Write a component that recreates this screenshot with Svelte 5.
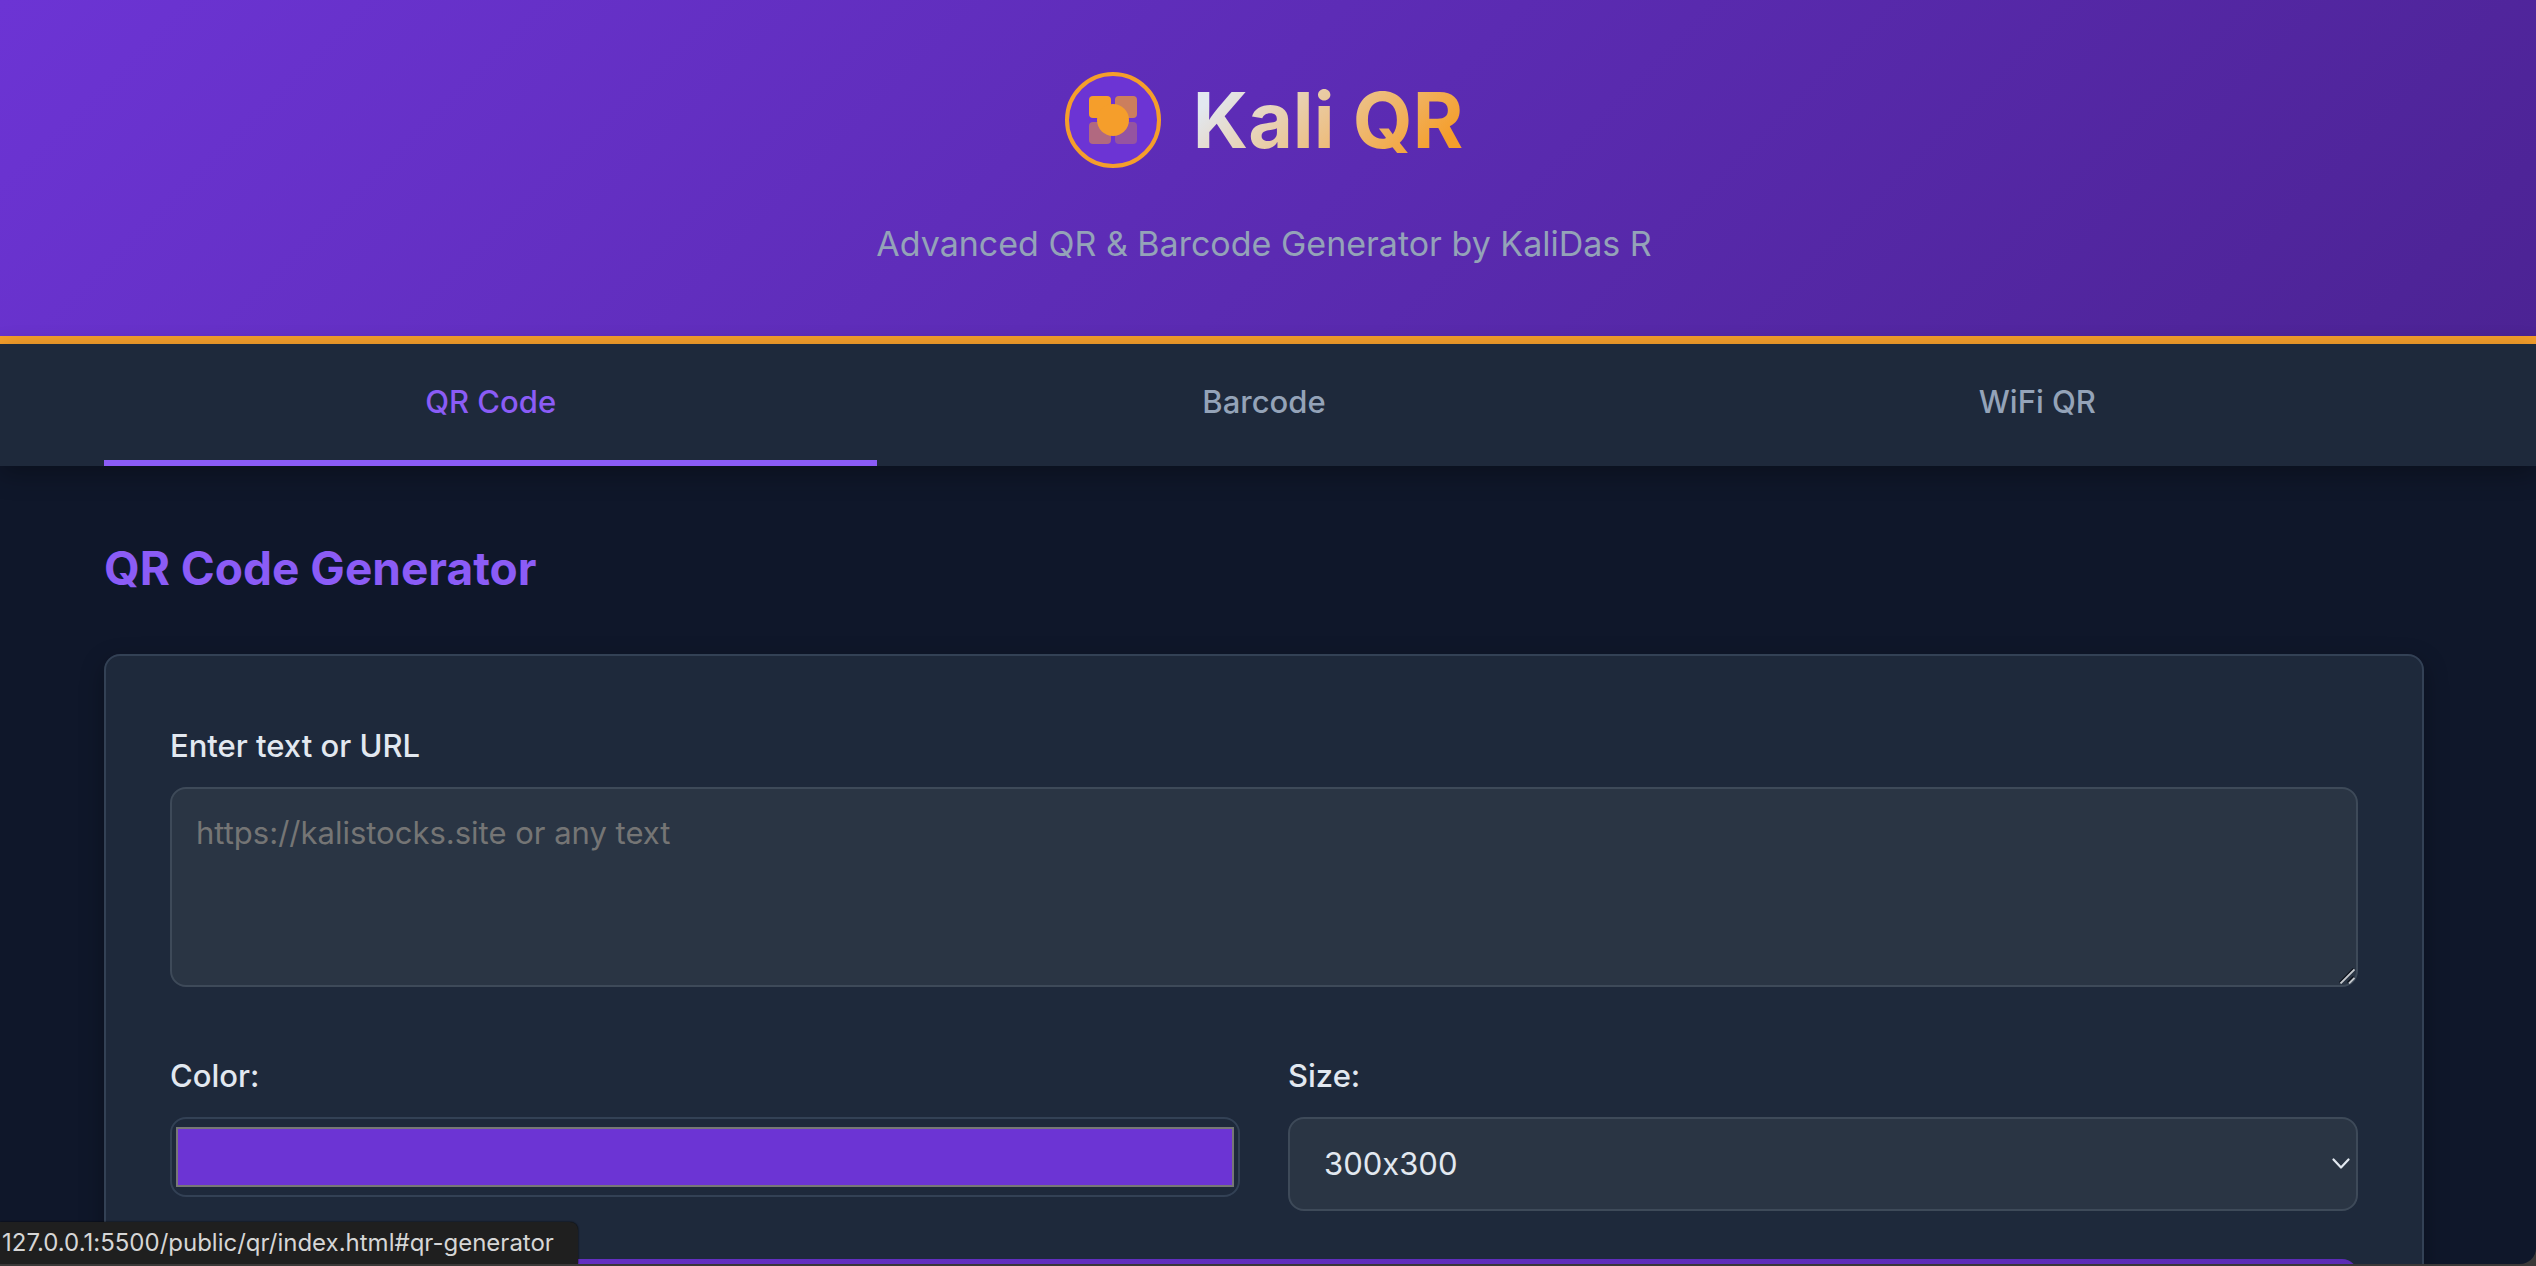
<script>
  const tabs = ['QR Code', 'Barcode', 'WiFi QR'];
  const sizes = ['200x200', '300x300', '400x400', '500x500'];
  let active = $state(0);
  let text = $state('');
  let color = $state('#6c34d4');
  let size = $state('300x300');
</script>

<div class="page">
  <header>
    <div class="brand">
      <svg class="logo" viewBox="0 0 96 96" aria-hidden="true">
        <circle cx="48" cy="48" r="46" fill="#6c34d4" stroke="#f59e2b" stroke-width="4" />
        <g fill="#f59e2b">
          <rect x="24" y="24" width="22" height="22" rx="4" />
          <rect x="50" y="24" width="22" height="22" rx="4" opacity="0.7" />
          <rect x="24" y="50" width="22" height="22" rx="4" opacity="0.5" />
          <rect x="50" y="50" width="22" height="22" rx="4" opacity="0.3" />
          <circle cx="48" cy="48" r="16" />
        </g>
      </svg>
      <h1>Kali QR</h1>
    </div>
    <p class="tagline">Advanced QR &amp; Barcode Generator by KaliDas R</p>
  </header>

  <nav>
    {#each tabs as tab, i}
      <button type="button" class="tab" class:active={active === i} onclick={() => (active = i)}>{tab}</button>
    {/each}
  </nav>

  <main>
    <h2>QR Code Generator</h2>
    <form class="card">
      <div class="field">
        <label for="content">Enter text or URL</label>
        <div class="stack textbox">
          <textarea id="content" bind:value={text} placeholder="https://kalistocks.site or any text"></textarea>
          <svg viewBox="0 0 16 16" aria-hidden="true">
            <path d="M0.5 14.5 14.5 0.5M8.5 14.5 14.5 8.5" stroke="#0b1018" stroke-width="1.5" />
            <path d="M1.5 15.5 15.5 1.5M10 15.5 15.5 10" stroke="#c3c7cc" stroke-width="1.8" />
          </svg>
        </div>
      </div>
      <div class="options">
        <div class="field">
          <label for="color">Color:</label>
          <input id="color" type="color" bind:value={color} />
        </div>
        <div class="field">
          <label for="size">Size:</label>
          <div class="stack select">
            <select id="size" bind:value={size}>
              {#each sizes as s}
                <option>{s}</option>
              {/each}
            </select>
            <svg viewBox="0 0 18 12" aria-hidden="true">
              <path d="M1.5 1.5 9 9.5 16.5 1.5" fill="none" stroke="#e2e8f0" stroke-width="2.2" stroke-linecap="round" stroke-linejoin="round" />
            </svg>
          </div>
        </div>
      </div>
      <button type="button" class="generate" aria-label="Generate"></button>
    </form>
  </main>

  <div class="status">127.0.0.1:5500/public/qr/index.html#qr-generator</div>
</div>

<style>
  :global(body) {
    background: #3a3838;
  }
  .page {
    box-sizing: border-box;
    height: calc(100vh - 2px);
    overflow: hidden;
    position: relative;
    border-bottom-right-radius: 16px;
    background: #0f172a;
    color: #e2e8f0;
    font-family: Inter, 'Liberation Sans', sans-serif;
    font-size: 31px;
    line-height: 52px;
    font-feature-settings: 'calt' 0;
  }
  h1, h2, p {
    margin: 0;
  }
  header {
    display: flex;
    flex-direction: column;
    align-items: center;
    gap: 48px;
    padding: 72px 112px 64px 104px;
    background: linear-gradient(135deg, #6c34d4, #4c2394);
    border-bottom: 8px solid #f59e2b;
  }
  .brand {
    display: flex;
    align-items: center;
    gap: 32px;
  }
  .logo {
    width: 96px;
    height: 96px;
  }
  h1 {
    font-size: 77px;
    line-height: 96px;
    font-weight: 700;
    background: linear-gradient(135deg, #e2e8f0 12%, #f59e2b 88%);
    background-clip: text;
    color: transparent;
  }
  .tagline {
    font-size: 34px;
    line-height: 56px;
    color: #94a3b8;
  }
  nav {
    position: relative;
    display: flex;
    padding: 0 112px 0 104px;
    background: #1e293b;
    box-shadow: 0 8px 24px rgba(0, 0, 0, 0.3);
  }
  .tab {
    flex: 1;
    padding: 32px;
    border: 0;
    border-bottom: 6px solid transparent;
    background: none;
    color: #94a3b8;
    font: inherit;
    font-weight: 500;
  }
  .tab.active {
    color: #8b5cf6;
    border-bottom-color: #8b5cf6;
  }
  main {
    padding: 64px 112px 64px 104px;
  }
  h2 {
    margin-bottom: 48px;
    font-size: 46px;
    line-height: 76px;
    font-weight: 700;
    color: #8b5cf6;
  }
  .card {
    display: flex;
    flex-direction: column;
    gap: 48px;
    padding: 64px;
    border: 2px solid #334155;
    border-radius: 16px;
    background: #1e293b;
    box-shadow: 0 8px 24px rgba(0, 0, 0, 0.3);
  }
  .field {
    display: flex;
    flex-direction: column;
    gap: 15px;
  }
  label {
    font-weight: 500;
  }
  .stack {
    display: grid;
    align-items: center;
  }
  .stack > * {
    grid-area: 1 / 1;
  }
  .stack svg {
    justify-self: end;
    pointer-events: none;
  }
  textarea {
    box-sizing: border-box;
    width: 100%;
    height: 200px;
    padding: 24px;
    border: 2px solid #3e4a59;
    border-radius: 16px;
    background: #2a3544;
    color: #e2e8f0;
    font: inherit;
    line-height: 39px;
    resize: none;
  }
  textarea::placeholder {
    color: #757575;
  }
  .textbox svg {
    align-self: end;
    width: 16px;
    height: 16px;
    margin: 0 3px 3px 0;
  }
  .options {
    display: grid;
    grid-template-columns: 1fr 1fr;
    align-items: start;
    gap: 48px;
    margin-top: 15px;
  }
  input {
    box-sizing: border-box;
    width: 100%;
    height: 80px;
    padding: 8px 4px;
    border: 2px solid #334155;
    border-radius: 16px;
    background: none;
  }
  input::-webkit-color-swatch-wrapper {
    padding: 0;
  }
  input::-webkit-color-swatch {
    border: 2px solid #777;
  }
  select {
    appearance: none;
    box-sizing: border-box;
    width: 100%;
    height: 94px;
    padding: 0 34px;
    border: 2px solid #3e4a59;
    border-radius: 16px;
    background: #2a3544;
    color: #e2e8f0;
    font: inherit;
    font-feature-settings: 'calt' 0;
  }
  .select svg {
    width: 18px;
    height: 12px;
    margin-right: 8px;
  }
  .generate {
    height: 96px;
    border: 0;
    border-radius: 16px;
    background: linear-gradient(135deg, #6530c4, #5b2bb5);
  }
  .status {
    position: absolute;
    left: 0;
    bottom: 0;
    padding: 0 24px 0 2px;
    border-top-right-radius: 8px;
    background: #1f1f1f;
    box-shadow: 0 0 2px #000;
    color: #d6d6d6;
    font-size: 24px;
    line-height: 42px;
  }
</style>
